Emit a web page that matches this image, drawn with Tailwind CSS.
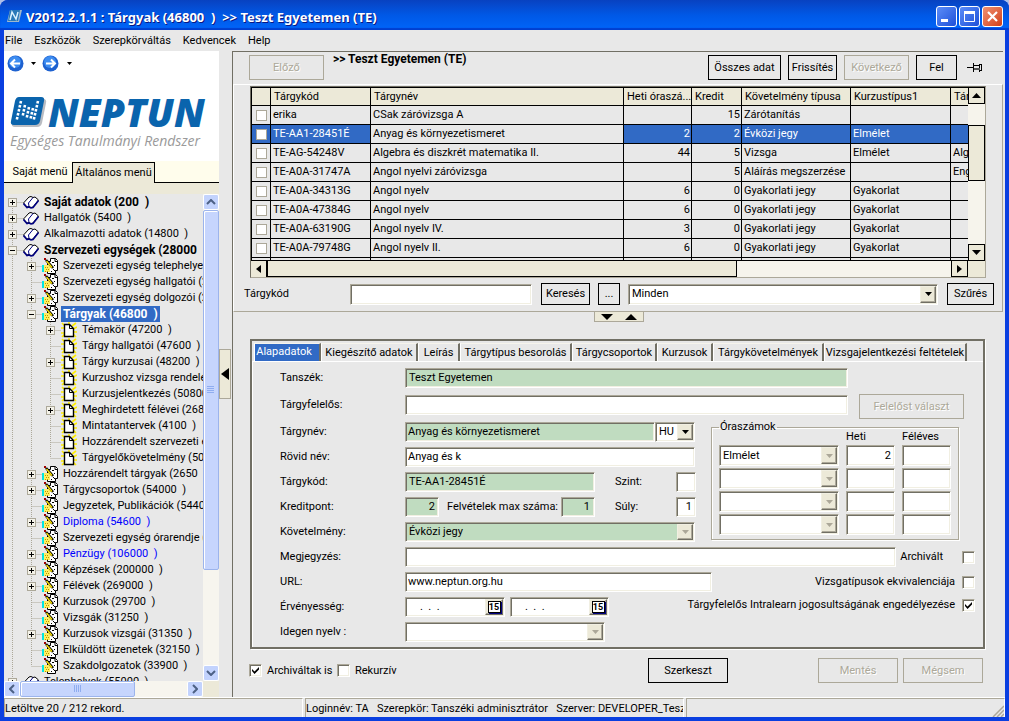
<!DOCTYPE html>
<html lang="hu">
<head>
<meta charset="utf-8">
<title>V2012.2.1.1 : Tárgyak</title>
<script src="https://cdn.jsdelivr.net/npm/@tailwindcss/browser@4"></script>
</head>
<body class="bg-[#aebfe8]">
<svg class="hidden">
  <symbol id="book" viewBox="0 0 16 16"><path d="M.5 9 6 3l2-.5 2 1 2-.5 3.500 3L10 13l-2 .5-2-1-2 .5z" fill="#fff" stroke="#000"/><path d="M.5 9.500 4 13.500l2-.5 2 1 2-.5 5.500-7" fill="none" stroke="#000080" stroke-width="1.600"/><path d="M10 3.500 5.500 9l.5 3.500" fill="none" stroke="#000080"/></symbol>
  <symbol id="write" viewBox="0 0 16 16"><path d="M8.500.5h5l2 2v10h-2v3h-8v-12h3z" fill="#fff" stroke="#000"/><path d="M13 .5v3h2.500" fill="none" stroke="#000"/><path d="M0 7h2v7H0z" fill="#00e5e5"/><path d="M2 7h5l2 1v2H8v4H2z" fill="#ffee62"/><path d="M3 9.500h4M4 11.500h3M3 13.500h4" stroke="#b59a00" stroke-dasharray="1 1"/><path d="M4 2l7 8" stroke="#000" stroke-width="2.600"/><path d="M4.500 3l5.500 6.500" stroke="#ffe600" stroke-width="1.300"/><path d="M2 0h2v2H2z" fill="#a00000"/><path d="M10 4.500h2M9 13.500h1M12 12.500h1M12 7.500h1M11 11.500h1" stroke="#000"/></symbol>
  <symbol id="page" viewBox="0 0 16 16"><path d="M1 1l3 3M8 0v3M15 1l-4 3M0 6h4M12 7l4-2M0 11h4M12 10h4M1 15l3-3M15 15l-3-3" stroke="#ffee00" stroke-width="1.600"/><path d="M3.500 2.500h5l4 4v8h-9z" fill="#fff" stroke="#000" stroke-width="1.400"/><path d="M8.500 2.500v4h4" fill="none" stroke="#000"/></symbol>
  <symbol id="tick" viewBox="0 0 7 7"><path d="M0 2v2l2.500 3L7 2.500V0L2.500 4.500z"/></symbol>
  <symbol id="down" viewBox="0 0 7 4"><path d="M0 0h7L3.500 4z"/></symbol>
</svg>
<div class="flex h-screen flex-col overflow-hidden rounded-t-lg bg-[#0a3fe0] font-[Roboto,'Liberation_Sans',sans-serif] text-[11px] leading-4 text-black
 [&_.sunk]:border [&_.sunk]:border-t-[#aca899] [&_.sunk]:border-l-[#aca899] [&_.sunk]:border-r-white [&_.sunk]:border-b-white [&_.sunk]:shadow-[inset_1px_1px_0_#716f64,inset_-1px_-1px_0_#f1efe2]
 [&_.btn]:border [&_.btn]:border-black [&_.btn:disabled]:border-[#aca899] [&_.btn:disabled]:text-[#aca899] [&_.btn:disabled]:[text-shadow:1px_1px_0_#fff]
 [&_.drop]:border [&_.drop]:border-t-[#f1efe2] [&_.drop]:border-l-[#f1efe2] [&_.drop]:border-r-[#716f64] [&_.drop]:border-b-[#716f64] [&_.drop]:bg-[#ece9d8] [&_.drop]:shadow-[inset_-1px_-1px_0_#aca899]">

  <!-- title bar -->
  <header class="flex h-[30px] shrink-0 items-center bg-linear-to-b from-[#0842c0] via-[#0058e6] to-[#0066fa] pr-[6px] pl-[7px] shadow-[inset_0_-2px_1px_#003fd0]">
    <svg class="mt-[2px] mr-[4px] size-[15px]" viewBox="0 0 15 15"><path d="M3 1h12l-3 12H0z" fill="#9fb8cc"/><path d="M3 1h10l-2 11H1z" fill="#2878b8"/><path d="M3 11 5 3l4 7 2-7" fill="none" stroke="#d8f0ff" stroke-width="1.500"/></svg>
    <h1 class="mt-[4px] whitespace-pre font-['Noto_Sans',sans-serif] text-[13px] font-bold text-white [text-shadow:1px_1px_0_#0a1883]">V2012.2.1.1 : Tárgyak (46800  )  &gt;&gt; Teszt Egyetemen (TE)</h1>
    <div class="mt-[3px] ml-auto flex gap-[2px]">
      <button aria-label="Kis méret" class="size-[21px] rounded-[3px] border border-white bg-linear-to-br from-[#5c8cf8] to-[#1f4fd8]"><svg viewBox="0 0 19 19"><path d="M4 12h7v3H4z" fill="#fff"/></svg></button>
      <button aria-label="Teljes méret" class="size-[21px] rounded-[3px] border border-white bg-linear-to-br from-[#5c8cf8] to-[#1f4fd8]"><svg viewBox="0 0 19 19"><path d="M4.500 5.500h10v9h-10z" fill="none" stroke="#fff"/><path d="M4 4h11v3H4z" fill="#fff"/></svg></button>
      <button aria-label="Bezárás" class="size-[21px] rounded-[3px] border border-white bg-linear-to-br from-[#f09070] to-[#d03c10]"><svg viewBox="0 0 19 19"><path d="M5 5l9 9M14 5l-9 9" stroke="#fff" stroke-width="2.200"/></svg></button>
    </div>
  </header>

  <div class="mx-[4px] mb-[4px] flex min-h-0 flex-1 flex-col bg-[#e8e8e8]">
    <nav class="flex h-[21px] shrink-0 items-center gap-[12px] pl-[1px]">
      <a href="#">File</a><a href="#">Eszközök</a><a href="#">Szerepkörváltás</a><a href="#">Kedvencek</a><a href="#">Help</a>
    </nav>

    <div class="flex min-h-0 flex-1">
      <!-- side panel -->
      <aside class="flex w-[215px] shrink-0 flex-col">
        <div class="h-[110px] shrink-0 bg-white">
          <div class="flex items-center pt-[4px] pl-[3px]">
            <button aria-label="Vissza"><svg class="size-[17px]" viewBox="0 0 17 17"><circle cx="8.500" cy="8.500" r="8" fill="#1e62d0"/><circle cx="8" cy="7" r="6" fill="#3d8cf0"/><path d="M4 8.500h9M8 4.500l-4 4 4 4" fill="none" stroke="#fff" stroke-width="2"/></svg></button>
            <svg class="mr-[6px] ml-[7px] h-[3px] w-[5px]" viewBox="0 0 5 3"><path d="M0 0h5L2.500 3z"/></svg>
            <button aria-label="Előre"><svg class="size-[17px]" viewBox="0 0 17 17"><circle cx="8.500" cy="8.500" r="8" fill="#1e62d0"/><circle cx="8" cy="7" r="6" fill="#3d8cf0"/><path d="M4 8.500h9M9 4.500l4 4-4 4" fill="none" stroke="#fff" stroke-width="2"/></svg></button>
            <svg class="mx-[8px] h-[3px] w-[5px]" viewBox="0 0 5 3"><path d="M0 0h5L2.500 3z"/></svg>
          </div>
          <div class="mt-[22px] flex h-[36px] items-center pl-[6px]">
            <svg class="h-[32px] w-[38px] shrink-0" viewBox="0 0 38 32"><path d="M9 3h24q4 0 3 4l-4 20q-1 4-5 4H5q-4 0-3-4z" fill="#b9bcc2"/><path d="M9 1h22q4 0 3 4l-4 20q-1 4-5 4H4q-4 0-3-4L5 5q1-4 4-4z" fill="#0a64ad"/><g stroke="#fff" stroke-width="2.600" stroke-dasharray="2.600 1.500" fill="none"><path d="M11 5 6.500 25M15 9l-2.500 12M19 11l-2.500 12M23 12l-2.500 11M28 5l-4.500 20"/></g></svg>
            <span class="font-['Open_Sans',sans-serif] text-[39px] leading-[36px] font-extrabold text-[#0a64ad] italic">NEPTUN</span>
          </div>
          <p class="pt-[2px] pl-[6px] font-['Open_Sans',sans-serif] text-[14px] leading-[18px] whitespace-nowrap text-[#9a9a9a] italic">Egységes Tanulmányi Rendszer</p>
        </div>
        <div class="flex h-[22px] shrink-0 items-end border-b border-black bg-[#fffdec]">
          <button class="h-[20px] w-[68px] pl-[4px] whitespace-nowrap">Saját menü</button>
          <button class="-mb-px h-[21px] w-[83px] border border-b-0 border-black bg-[#ece9d8] whitespace-nowrap">Általános menü</button>
        </div>
        <div class="h-[11px] shrink-0 bg-[#ece9d8]"></div>
        <div class="flex min-h-0 flex-1">
          <ul id="tree" class="min-w-0 flex-1 overflow-hidden"></ul>
          <div class="flex w-[16px] shrink-0 flex-col bg-[#f7f5ee]">
            <button aria-label="Fel" class="grid h-[16px] place-items-center rounded-[2px] border border-white bg-[#c3d3fd]"><svg class="h-[6px] w-[10px]" viewBox="0 0 10 6"><path d="M1 5l4-4 4 4" fill="none" stroke="#4d6185" stroke-width="2"/></svg></button>
            <div class="grid h-[360px] place-items-center rounded-[2px] border border-[#9cb4ec] bg-[#c6d5fd] shadow-[inset_1px_1px_0_#fff]"><svg class="size-[8px]" viewBox="0 0 8 8"><path d="M0 .5h7M0 2.500h7M0 4.500h7M0 6.500h7" stroke="#8fadf0"/></svg></div>
            <button aria-label="Le" class="mt-auto grid h-[16px] place-items-center rounded-[2px] border border-white bg-[#c3d3fd]"><svg class="h-[6px] w-[10px]" viewBox="0 0 10 6"><path d="M1 1l4 4 4-4" fill="none" stroke="#4d6185" stroke-width="2"/></svg></button>
          </div>
        </div>
        <div class="flex h-[16px] shrink-0 bg-[#f7f5ee]">
          <button aria-label="Balra" class="grid w-[16px] place-items-center rounded-[2px] border border-white bg-[#c3d3fd]"><svg class="h-[10px] w-[6px]" viewBox="0 0 6 10"><path d="M5 1L1 5l4 4" fill="none" stroke="#4d6185" stroke-width="2"/></svg></button>
          <div class="grid w-[115px] place-items-center rounded-[2px] border border-[#9cb4ec] bg-[#c6d5fd] shadow-[inset_1px_1px_0_#fff]"><svg class="size-[8px]" viewBox="0 0 8 8"><path d="M.5 0v7M2.500 0v7M4.500 0v7M6.500 0v7" stroke="#8fadf0"/></svg></div>
          <button aria-label="Jobbra" class="ml-auto grid w-[16px] place-items-center rounded-[2px] border border-white bg-[#c3d3fd]"><svg class="h-[10px] w-[6px]" viewBox="0 0 6 10"><path d="M1 1l4 4-4 4" fill="none" stroke="#4d6185" stroke-width="2"/></svg></button>
          <div class="w-[16px] bg-[#ece9d8]"></div>
        </div>
      </aside>

      <!-- splitter -->
      <div class="flex w-[13px] shrink-0 items-center">
        <button aria-label="Panel elrejtése" class="grid h-[50px] w-[12px] place-items-center border border-[#aca899] bg-[#ece9d8]"><svg class="h-[12px] w-[8px]" viewBox="0 0 8 12"><path d="M8 0v12L0 6z"/></svg></button>
      </div>

      <!-- workspace -->
      <main class="flex min-w-0 flex-1 flex-col border-l border-[#716f64]">
        <section class="mr-[2px] border-t border-[#716f64]">
          <div class="flex h-[32px] gap-[7px] pt-[3px] pr-[20px] pl-[16px]">
            <button class="btn h-[25px] w-[75px]" disabled>Előző</button>
            <h2 class="ml-[2px] flex-1 text-[12px] leading-[8px] font-bold whitespace-pre">&gt;&gt; Teszt Egyetemen (TE)</h2>
            <button class="btn h-[25px] w-[73px]">Összes adat</button>
            <button class="btn h-[25px] w-[49px]">Frissítés</button>
            <button class="btn h-[25px] w-[65px]" disabled>Következő</button>
            <button class="btn h-[25px] w-[41px]">Fel</button>
            <button aria-label="Rögzítés" class="mt-[8px] ml-[3px] h-[10px] w-[16px]"><svg class="h-[10px] w-[16px]" viewBox="0 0 16 10"><path d="M0 4.500h6M6.500 0v9M7 2.500h6M7 6.500h6M12.500 1v8M14.500 1v7M13 1.500h2M13 7.500h2" stroke="#000" fill="none"/><path d="M7 5h6v2H7z" fill="#555"/></svg></button>
          </div>
          <div class="border-t border-l border-white border-r border-b border-r-[#aca899] border-b-[#aca899] pt-px pl-[16px]">
            <div class="mr-[16px] flex border border-[#aca899] border-t-[#716f64] border-l-[#716f64] bg-[#ece9d8]">
              <div class="min-w-0 flex-1">
                <div class="h-[174px] overflow-hidden border-b border-black bg-[#e8e8e8]">
                  <table class="w-[760px] table-fixed border-collapse">
                    <colgroup><col class="w-[19px]"><col class="w-[100px]"><col class="w-[253px]"><col class="w-[68px]"><col class="w-[50px]"><col class="w-[109px]"><col class="w-[100px]"><col class="w-[61px]"></colgroup>
                    <thead><tr class="h-[18px] bg-[#ece9d8] [&>th]:overflow-hidden [&>th]:border [&>th]:border-black [&>th]:p-0 [&>th]:pl-[3px] [&>th]:text-left [&>th]:font-normal [&>th]:whitespace-nowrap"><th></th><th>Tárgykód</th><th>Tárgynév</th><th>Heti óraszá...</th><th>Kredit</th><th>Követelmény típusa</th><th>Kurzustípus1</th><th>Tárgy</th></tr></thead>
                    <tbody id="rows"></tbody>
                  </table>
                </div>
                <div class="flex h-[16px] bg-[#f6f4ec]">
                  <button aria-label="Balra" class="grid w-[16px] place-items-center border-r border-black bg-[#ece9d8]"><svg class="h-[8px] w-[5px]" viewBox="0 0 5 8"><path d="M5 0v8L0 4z"/></svg></button>
                  <div class="w-[470px] border border-t-0 border-black bg-[#ece9d8]"></div>
                  <button aria-label="Jobbra" class="ml-auto grid w-[17px] place-items-center border border-t-0 border-black bg-[#ece9d8]"><svg class="h-[8px] w-[5px]" viewBox="0 0 5 8"><path d="M0 0v8l5-4z"/></svg></button>
                </div>
              </div>
              <div class="flex w-[17px] flex-col bg-[#f6f4ec]">
                <button aria-label="Fel" class="grid h-[17px] place-items-center border border-black bg-[#ece9d8]"><svg class="h-[5px] w-[9px]" viewBox="0 0 9 5"><path d="M0 5h9L4.500 0z"/></svg></button>
                <div class="mt-[21px] h-[56px] border border-black bg-[#ece9d8]"></div>
                <button aria-label="Le" class="mt-auto grid h-[17px] place-items-center border border-black bg-[#ece9d8]"><svg class="h-[5px] w-[9px]" viewBox="0 0 9 5"><path d="M0 0h9L4.500 5z"/></svg></button>
                <div class="h-[16px] bg-[#ece9d8]"></div>
              </div>
            </div>
            <div class="-ml-[6px] flex h-[33px] items-center pr-[8px] pb-px">
              <label for="code" class="w-[106px]">Tárgykód</label>
              <input id="code" class="sunk h-[21px] w-[182px] bg-white px-[3px]">
              <button class="btn ml-[9px] h-[22px] w-[49px]">Keresés</button>
              <button class="btn ml-[8px] h-[22px] w-[22px]">...</button>
              <div class="sunk ml-[8px] grid h-[21px] flex-1 bg-white">
                <select aria-label="Szűrő" class="col-start-1 row-start-1 appearance-none pl-[3px]"><option>Minden</option></select>
                <span class="drop pointer-events-none col-start-1 row-start-1 my-px mr-px grid w-[16px] place-items-center justify-self-end"><svg class="h-[4px] w-[7px]"><use href="#down"/></svg></span>
              </div>
              <button class="btn ml-[9px] h-[22px] w-[47px]">Szűrés</button>
            </div>
          </div>
        </section>

        <div class="flex h-[27px] justify-center">
          <button aria-label="Panelek mérete" class="flex h-[10px] w-[50px] items-center justify-center gap-[12px] border border-t-0 border-[#aca899] bg-[#ece9d8]"><svg class="h-[6px] w-[12px]" viewBox="0 0 12 6"><path d="M0 0h12L6 6z"/></svg><svg class="h-[6px] w-[12px]" viewBox="0 0 12 6"><path d="M0 6h12L6 0z"/></svg></button>
        </div>

        <section class="mr-[20px] ml-[17px] flex h-[310px] flex-col border-2 border-t-[#716f64] border-r-[#716f64] border-b-[#716f64] border-l-[#716f64] bg-[#e8e8e8] shadow-[1px_1px_0_#fff]">
          <div role="tablist" class="flex h-[20px] shrink-0 items-end pl-[2px] whitespace-nowrap [&>button]:h-[18px] [&>button]:border-t [&>button]:border-r-2 [&>button]:border-l [&>button]:border-t-[#f6f4ec] [&>button]:border-l-white [&>button]:border-r-[#716f64]">
            <button class="w-[67px] bg-[#316ac5] pr-[6px] pb-[4px] text-white">Alapadatok</button>
            <button class="w-[97px]">Kiegészítő adatok</button>
            <button class="w-[42px]">Leírás</button>
            <button class="w-[112px]">Tárgytípus besorolás</button>
            <button class="w-[85px]">Tárgycsoportok</button>
            <button class="w-[56px]">Kurzusok</button>
            <button class="w-[111px]">Tárgykövetelmények</button>
            <button class="w-[143px]">Vizsgajelentkezési feltételek</button>
          </div>
          <form class="flex-1 border-t border-l border-white pt-[6px] pr-[8px] pl-[27px] [&_label.cap]:w-[125px] [&_label.cap]:shrink-0 [&_label.cap]:leading-5">
            <div class="flex justify-between pr-[11px]">
              <div>
                <div class="mb-[7px] flex h-[20px]"><label class="cap" for="f1">Tanszék:</label><input id="f1" class="sunk w-[443px] bg-[#c0dcc0] px-[3px]" value="Teszt Egyetemen"></div>
                <div class="mb-[6px] flex h-[20px]"><label class="cap" for="f2">Tárgyfelelős:</label><input id="f2" class="sunk w-[443px] bg-white px-[3px]"></div>
              </div>
              <button type="button" class="btn mt-[26px] h-[25px] w-[105px]" disabled>Felelőst választ</button>
            </div>
            <div class="flex justify-between pr-[16px]">
              <div class="mt-px flex flex-col gap-[5px]">
                <div class="flex h-[20px]"><label class="cap" for="f3">Tárgynév:</label><input id="f3" class="sunk w-[250px] bg-[#c0dcc0] px-[2px]" value="Anyag és környezetismeret">
                  <div class="sunk grid w-[40px] bg-white"><select aria-label="Nyelv" class="col-start-1 row-start-1 appearance-none pl-[3px]"><option>HU</option></select><span class="drop pointer-events-none col-start-1 row-start-1 my-px mr-px grid w-[16px] place-items-center justify-self-end"><svg class="h-[4px] w-[7px]"><use href="#down"/></svg></span></div></div>
                <div class="flex h-[20px]"><label class="cap" for="f4">Rövid név:</label><input id="f4" class="sunk w-[290px] bg-white px-[2px]" value="Anyag és k"></div>
                <div class="flex h-[20px]"><label class="cap" for="f5">Tárgykód:</label><input id="f5" class="sunk w-[190px] bg-[#c0dcc0] px-[3px]" value="TE-AA1-28451É"><label for="f6" class="ml-[20px] w-[61px] leading-5">Szint:</label><input id="f6" class="sunk w-[20px] bg-white"></div>
                <div class="flex h-[20px]"><label class="cap" for="f7">Kreditpont:</label><input id="f7" class="sunk w-[34px] bg-[#c0dcc0] pr-[3px] text-right" value="2"><label for="f8" class="ml-[8px] w-[114px] leading-5 whitespace-nowrap">Felvételek max száma:</label><input id="f8" class="sunk w-[34px] bg-[#c0dcc0] pr-[4px] text-right" value="1"><label for="f9" class="ml-[20px] w-[61px] leading-5">Súly:</label><input id="f9" class="sunk w-[20px] bg-white pr-[3px] text-right" value="1"></div>
                <div class="flex h-[20px]"><label class="cap" for="f10">Követelmény:</label>
                  <div class="sunk grid w-[290px] bg-[#c0dcc0]"><select id="f10" class="col-start-1 row-start-1 appearance-none pl-[3px]"><option>Évközi jegy</option></select><span class="drop pointer-events-none col-start-1 row-start-1 my-px mr-px grid w-[16px] place-items-center justify-self-end"><svg class="h-[4px] w-[7px] fill-[#aca899]"><use href="#down"/></svg></span></div></div>
              </div>
              <fieldset class="h-[119px] w-[248px] border border-[#aca899] px-[7px] shadow-[1px_1px_0_#fff,inset_1px_1px_0_#fff]">
                <legend class="h-[12px] px-px leading-[12px]">Óraszámok</legend>
                <div id="hours" class="grid grid-cols-[120px_49px_49px] gap-x-[7px] gap-y-[2px] [&>b]:h-[10px] [&>b]:leading-[8px] [&>b]:font-normal"><b></b><b>Heti</b><b>Féléves</b></div>
              </fieldset>
            </div>
            <div class="mt-[5px] flex flex-col gap-[5px]">
              <div class="flex h-[20px]"><label class="cap" for="f11">Megjegyzés:</label><input id="f11" class="sunk w-[491px] bg-white px-[3px]"><label for="c1" class="ml-auto leading-5">Archivált</label><input id="c1" type="checkbox" class="sunk mt-[4px] ml-[19px] size-[13px] appearance-none bg-white"></div>
              <div class="flex h-[20px]"><label class="cap" for="f12">URL:</label><input id="f12" class="sunk w-[307px] bg-white px-[2px]" value="www.neptun.org.hu"><label for="c2" class="ml-auto leading-5">Vizsgatípusok ekvivalenciája</label><input id="c2" type="checkbox" class="sunk mt-[4px] ml-[7px] size-[13px] appearance-none bg-white"></div>
              <div class="flex h-[20px]"><label class="cap" for="f13">Érvényesség:</label>
                <div class="sunk flex w-[100px] bg-white"><input id="f13" class="min-w-0 flex-1 pl-[14px] whitespace-pre" value=".  .  ."><button type="button" class="drop my-px mr-px w-[18px]"><span class="mx-auto block h-[12px] w-[13px] border border-black bg-white text-[9px] leading-[10px] font-bold shadow-[1px_1px_0_#000080]">15</span></button></div>
                <div class="sunk ml-[5px] flex w-[99px] bg-white"><input aria-label="Érvényesség vége" class="min-w-0 flex-1 pl-[14px] whitespace-pre" value=".  .  ."><button type="button" class="drop my-px mr-px w-[18px]"><span class="mx-auto block h-[12px] w-[13px] border border-black bg-white text-[9px] leading-[10px] font-bold shadow-[1px_1px_0_#000080]">15</span></button></div>
                <label for="c3" class="ml-auto">Tárgyfelelős Intralearn jogosultságának engedélyezése</label>
                <span class="mt-[2px] ml-[7px] grid size-[13px] place-items-center"><input id="c3" type="checkbox" checked class="sunk col-start-1 row-start-1 size-[13px] appearance-none bg-white"><svg class="pointer-events-none col-start-1 row-start-1 size-[7px]"><use href="#tick"/></svg></span></div>
              <div class="flex h-[20px]"><label class="cap" for="f14">Idegen nyelv :</label>
                <div class="sunk grid w-[200px] bg-white"><select id="f14" class="col-start-1 row-start-1 appearance-none"><option></option></select><span class="drop pointer-events-none col-start-1 row-start-1 my-px mr-px grid w-[16px] place-items-center justify-self-end"><svg class="h-[4px] w-[7px] fill-[#aca899]"><use href="#down"/></svg></span></div></div>
            </div>
          </form>
        </section>

        <div class="mt-[9px] flex h-[25px] items-center pr-[22px] pl-[16px]">
          <span class="grid size-[13px] place-items-center"><input id="c4" type="checkbox" checked class="sunk col-start-1 row-start-1 size-[13px] appearance-none bg-white"><svg class="pointer-events-none col-start-1 row-start-1 size-[7px]"><use href="#tick"/></svg></span>
          <label for="c4" class="ml-[5px] w-[70px] whitespace-nowrap">Archiváltak is</label>
          <input id="c5" type="checkbox" class="sunk size-[13px] appearance-none bg-white"><label for="c5" class="ml-[5px]">Rekurzív</label>
          <button class="btn mr-[90px] ml-auto h-[25px] w-[80px]">Szerkeszt</button>
          <button class="btn mr-[5px] h-[25px] w-[80px]" disabled>Mentés</button>
          <button class="btn h-[25px] w-[80px]" disabled>Mégsem</button>
        </div>
      </main>
    </div>

    <footer class="flex h-[20px] shrink-0 gap-[2px] border-t border-white whitespace-pre [&>div]:border-t [&>div]:border-r [&>div]:border-l [&>div]:border-t-[#aca899] [&>div]:border-l-[#aca899] [&>div]:border-r-white">
      <div class="w-[299px] leading-[19px]">Letöltve 20 / 212 rekord.</div>
      <div class="w-[379px] overflow-hidden leading-[19px]">Loginnév: TA   Szerepkör: Tanszéki adminisztrátor   Szerver: DEVELOPER_Tesz</div>
      <div class="flex flex-1 items-end justify-end"><svg class="size-[12px]" viewBox="0 0 12 12"><path d="M1 12 12 1M5 12l7-7M9 12l3-3" stroke="#aca899" stroke-width="1.500"/></svg></div>
    </footer>
  </div>
</div>
<script>
// level, expander (+, - or empty), label, style (b = bold, s = selected, l = link)
const tree = [
 [0,'+','Saját adatok (200  )','b'],[0,'+','Hallgatók (5400  )'],[0,'+','Alkalmazotti adatok (14800  )'],[0,'-','Szervezeti egységek (28000','b'],
 [1,'+','Szervezeti egység telephelyei'],[1,'','Szervezeti egység hallgatói (2'],[1,'+','Szervezeti egység dolgozói (2'],[1,'-','Tárgyak (46800  )','s'],
 [2,'+','Témakör (47200  )'],[2,'','Tárgy hallgatói (47600  )'],[2,'+','Tárgy kurzusai (48200  )'],[2,'','Kurzushoz vizsga rendelé'],[2,'','Kurzusjelentkezés (50800'],[2,'+','Meghirdetett félévei (2684'],[2,'','Mintatantervek (4100  )'],[2,'','Hozzárendelt szervezeti e'],[2,'','Tárgyelőkövetelmény (50'],
 [1,'+','Hozzárendelt tárgyak (2650  )'],[1,'+','Tárgycsoportok (54000  )'],[1,'','Jegyzetek, Publikációk (5440'],[1,'+','Diploma (54600  )','l'],[1,'','Szervezeti egység órarendje ('],[1,'+','Pénzügy (106000  )','l'],[1,'+','Képzések (200000  )'],[1,'+','Félévek (269000  )'],[1,'','Kurzusok (29700  )'],[1,'','Vizsgák (31250  )'],[1,'+','Kurzusok vizsgái (31350  )'],[1,'','Elküldött üzenetek (32150  )'],[1,'','Szakdolgozatok (33900  )'],[0,'+','Telephelyek (55000  )']];
const look = {b:'text-[12px] font-bold', s:'bg-[#316ac5] text-[12px] font-bold text-white', l:'text-[#0000ff]'};
document.getElementById('tree').innerHTML = tree.map(([lv,ex,label,st],i) => {
  const w = 19 * (lv + 1), x = 8.5 + 19 * lv;
  let d = '';
  for (let k = 0; k <= lv; k++) {
    const last = k === lv && k > 0 && (!tree.slice(i + 1).some(r => r[0] === k) || (tree[i + 1] && tree[i + 1][0] < k));
    d += `M${8.5 + 19 * k} ${i ? 0 : 8}V${last ? 8 : 16}`;
  }
  d += `M${x} 8.5H${w}`;
  const box = ex ? `<rect x="${x-4}" y="4.5" width="8" height="8" fill="#f4f2e8" stroke="#aca899"/><path d="M${x-2.5} 8.500h5${ex === '+' ? `M${x} 6v5` : ''}" stroke="#000"/>` : '';
  return `<li class="flex h-[16px] items-center whitespace-pre"><svg class="h-[16px] shrink-0" width="${w}" height="16"><path d="${d}" stroke="#aca899" stroke-dasharray="1 1" fill="none"/>${box}</svg><svg class="mr-[3px] size-[16px] shrink-0"><use href="#${['book','write','page'][lv]}"/></svg><span class="px-[2px] ${look[st] || ''}">${label}</span></li>`;
}).join('');

const rows = [['erika','CSak záróvizsga A','','15','Zárótanítás','',''],['TE-AA1-28451É','Anyag és környezetismeret','2','2','Évközi jegy','Elmélet',''],['TE-AG-54248V','Algebra és diszkrét matematika II.','44','5','Vizsga','Elmélet','Algebra'],['TE-A0A-31747A','Angol nyelvi záróvizsga','','5','Aláírás megszerzése','','English'],['TE-A0A-34313G','Angol nyelv','6','0','Gyakorlati jegy','Gyakorlat',''],['TE-A0A-47384G','Angol nyelv','6','0','Gyakorlati jegy','Gyakorlat',''],['TE-A0A-63190G','Angol nyelv IV.','3','0','Gyakorlati jegy','Gyakorlat',''],['TE-A0A-79748G','Angol nyelv II.','6','0','Gyakorlati jegy','Gyakorlat',''],['','','','','','','']];
document.getElementById('rows').innerHTML = rows.map((r,i) =>
  `<tr class="h-[19px] ${i === 1 ? 'bg-[#316ac5] text-white' : ''}"><td class="border border-black p-0"><input type="checkbox" aria-label="${r[0] || 'sor'}" class="mx-auto block size-[11px] appearance-none border border-[#aca899] bg-white"></td>` +
  r.map((c,j) => `<td class="overflow-hidden border border-black p-0 whitespace-nowrap ${j === 2 || j === 3 ? 'pr-px text-right' : 'pl-[2px]'} ${i === 1 && j === 1 ? 'bg-[#e8e8e8] text-black' : ''}">${c}</td>`).join('') + '</tr>').join('');

document.getElementById('hours').innerHTML += ['Elmélet','','',''].map((t,i) =>
  `<div class="sunk grid h-[21px] bg-white"><select aria-label="Óratípus ${i+1}" class="col-start-1 row-start-1 appearance-none pl-[3px]"><option>${t}</option></select><span class="drop pointer-events-none col-start-1 row-start-1 my-px mr-px grid w-[16px] place-items-center justify-self-end"><svg class="h-[4px] w-[7px] fill-[#aca899]"><use href="#down"/></svg></span></div>
   <input aria-label="Heti ${i+1}" class="sunk h-[21px] w-full min-w-0 bg-white pr-[3px] text-right" value="${i ? '' : '2'}"><input aria-label="Féléves ${i+1}" class="sunk h-[21px] w-full min-w-0 bg-white pr-[3px] text-right">`).join('');
</script>
</body>
</html>
